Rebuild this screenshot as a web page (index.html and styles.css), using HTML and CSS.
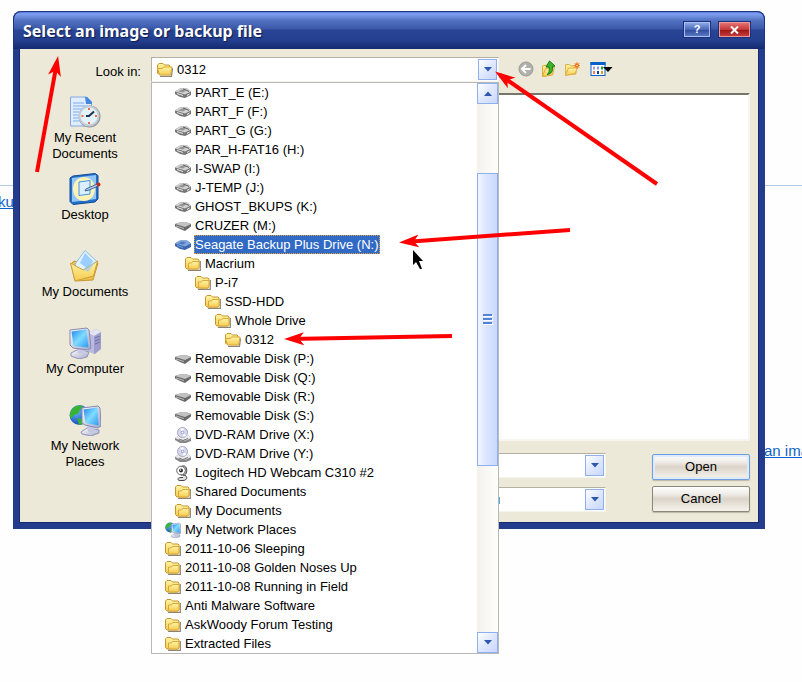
FILE: index.html
```html
<!DOCTYPE html>
<html lang="en">

<head>
    <meta charset="UTF-8">
    <meta name="viewport" content="width=device-width, initial-scale=1.0">
    <title>Select an image or backup file</title>
    <link rel="stylesheet" href="styles.css">
</head>

<body>
    <!-- shared icons -->
    <svg class="sprite" aria-hidden="true">
        <defs>
            <linearGradient id="gold" x1="0" y1="0" x2="0" y2="1">
                <stop offset="0" stop-color="#fff5a6" />
                <stop offset="1" stop-color="#f5cb50" />
            </linearGradient>
            <linearGradient id="screen" x1="0" y1="0" x2="1" y2="1">
                <stop offset="0" stop-color="#1f86ee" />
                <stop offset="0.5" stop-color="#7fdcff" />
                <stop offset="1" stop-color="#2e98f4" />
            </linearGradient>
            <linearGradient id="steel" x1="0" y1="0" x2="1" y2="1">
                <stop offset="0" stop-color="#ffffff" />
                <stop offset="1" stop-color="#a4a8c8" />
            </linearGradient>
            <radialGradient id="globe" cx="0.35" cy="0.3" r="0.8">
                <stop offset="0" stop-color="#6fb8ff" />
                <stop offset="1" stop-color="#0a3fae" />
            </radialGradient>
            <marker id="head" markerUnits="userSpaceOnUse" markerWidth="20" markerHeight="14" refX="14" refY="7" orient="auto">
                <path d="M20 7L0 0.5L5 7L0 13.5Z" fill="#f00" />
            </marker>
        </defs>
        <symbol id="folder" viewBox="0 0 16 16">
            <path d="M3 14.300h12.300V5" fill="none" stroke="#8a8478" stroke-width="1.200" />
            <path d="M0.500 11.500v-8.500l1.500-1.500h4l1.500 1.500h5.500l1 1v8l-1.500 1h-10.500z" fill="url(#gold)" stroke="#c9952a" />
            <path d="M3.500 12v-5h3l1-1.500h6.500v6.500l-1 1h-9z" fill="url(#gold)" stroke="#d9a838" />
        </symbol>
        <symbol id="folder-open" viewBox="0 0 16 16">
            <path d="M3 14.300h11.500l1-8" fill="none" stroke="#8a8478" stroke-width="1.200" />
            <path d="M0.500 11v-8l1.500-1.500h4l1.500 1.500h4.500l1 1v8h-11.500z" fill="url(#gold)" stroke="#c9952a" />
            <path d="M2.500 13l-2-6.500h5l1-1.500h8.500l-1.500 8z" fill="url(#gold)" stroke="#d9a838" />
        </symbol>
        <symbol id="drive" viewBox="0 0 16 16">
            <path d="M0 6.500L5 3.500h7l4 3v3.500l-6 3L5 12 0 9z" fill="#767676" />
            <path d="M0 6.500L5 3.500h7l4 3-6 3z" fill="#d2d2d2" />
            <path d="M3 6.500L7 4.500l4 1-3 2z" fill="#949494" />
            <path d="M8 4l4 1.500 2 1" stroke="#5c5c5c" fill="none" />
            <path d="M2 8.500l6 2" stroke="#e8e8e8" />
            <path d="M12 10.500l2.500-1.500" stroke="#f4f4f4" />
        </symbol>
        <symbol id="drive-flat" viewBox="0 0 16 16">
            <path d="M0 6L5 4.500h7l4 1.500v2.500l-6 4.500-5-2-5-2.500z" fill="#6a6a6a" />
            <path d="M0 6L5 4.500h7l4 1.500-6 3z" fill="#c3c3c3" />
            <path d="M1 8l8 2.500" stroke="#bbb" />
        </symbol>
        <symbol id="drive-on" viewBox="0 0 16 16">
            <path d="M0 6.500L5 3.500h7l4 3v3.500l-6 3L5 12 0 9z" fill="#3c65ae" />
            <path d="M0 6.500L5 3.500h7l4 3-6 3z" fill="#80a6de" />
            <path d="M3 6.500L7 4.500l4 1-3 2z" fill="#5179bd" />
            <path d="M2 8.500l6 2" stroke="#7ba4e4" />
        </symbol>
        <symbol id="dvd" viewBox="0 0 16 16">
            <path d="M0 11l4-3h9l3 3v3l-5 2H5l-5-3z" fill="#878787" />
            <path d="M0 11l4-3h9l3 3-5 2.500H6z" fill="#e9e9ee" />
            <circle cx="7.500" cy="5.500" r="5" fill="#d6d8f2" stroke="#a5a7bd" />
            <path d="M7.500 5.500L5 1.500h4zM7.500 5.500l4 3-3 1.500z" fill="#fff" />
            <circle cx="7.500" cy="5.500" r="1.300" fill="#fff" stroke="#7778ad" stroke-width="0.700" />
            <path d="M4 12l4 1.500 5-2" fill="none" stroke="#777" />
        </symbol>
        <symbol id="webcam" viewBox="0 0 16 16">
            <path d="M8 10c5 0 5 5.500 0 5.500H5c-3 0-3-3 1-3h2" fill="#ddd" stroke="#444" />
            <path d="M7 1h2.500c3 1.500 3 7.500 0 9H6z" fill="#bbb" stroke="#444" />
            <circle cx="6" cy="5.500" r="4.300" fill="#fff" stroke="#666" />
            <circle cx="6" cy="5.500" r="1.900" fill="#222" />
            <circle cx="5.500" cy="5" r="0.800" fill="#fff" />
        </symbol>
        <symbol id="computer" viewBox="0 0 32 32">
            <path d="M19 6l8-4 5 3v17l-6 5-7-3z" fill="#9d9ccc" />
            <path d="M19 6l8-4 5 3-7 4z" fill="#e4e4f5" />
            <path d="M19 6l6 3v18l-6-3z" fill="#bcbce2" />
            <path d="M26 11l5-2M26 14l5-2M26 17l5-2" stroke="#6e70a8" />
            <path d="M2 26l8-4 10 3-2 5-8 2-8-3z" fill="url(#steel)" stroke="#9093bd" />
            <path d="M8 20l8 2-1 5-6-1z" fill="#c5c7e3" />
            <path d="M1 3l17-2 2 2 2 18-3 2-15-2-3-3z" fill="url(#steel)" stroke="#8689b6" />
            <path d="M2.500 4.500l15-2 2 18-15-1.500z" fill="url(#screen)" />
        </symbol>
        <symbol id="network" viewBox="0 0 32 32">
            <circle cx="10.500" cy="11" r="10" fill="url(#globe)" />
            <path d="M3 5c3-4 8-4 11-3l-3 4-2 4-4 1-3 4c-2-4-1-7 1-10zM8 14l5 1 1 5-4 1z" fill="#38b335" />
            <path d="M12 28l6-4 12 2v3l-8 3-9-2z" fill="url(#steel)" stroke="#9093bd" />
            <path d="M18 21l8 2-1 5h-6z" fill="#c5c7e3" />
            <path d="M13 4l16-2 2 2 1 18-3 2-13-3-3-2z" fill="url(#steel)" stroke="#8689b6" />
            <path d="M14.500 5.500l14-2L29.500 21.500l-13-2.500z" fill="url(#screen)" />
        </symbol>
        <symbol id="arrow-down" viewBox="0 0 8 5">
            <path d="M0 0h8L4 4.500z" fill="#2d57ad" />
        </symbol>
    </svg>

    <div class="page-behind">
        <hr>
        <a class="link-left" href="#">ku</a>
        <a class="link-right" href="#">an ima</a>
    </div>

    <div class="dialog" role="dialog" aria-labelledby="dialog-title">
        <div class="titlebar">
            <h1 id="dialog-title">Select an image or backup file</h1>
            <button class="help" aria-label="Help">?</button>
            <button class="close" aria-label="Close">
                <svg width="9" height="8" viewBox="0 0 9 8"><path d="M1 0.500l7 7M8 0.500l-7 7" stroke="#fff" stroke-width="2" /></svg>
            </button>
        </div>

        <div class="content">
            <label class="look-label" for="look-in">Look in:</label>
            <div class="look-row">
                <div class="combo look-in">
                    <svg class="icon"><use href="#folder-open" /></svg>
                    <select id="look-in"><option>0312</option></select>
                    <span class="drop"><svg><use href="#arrow-down" /></svg></span>

                    <div class="menu">
                        <ul role="listbox" aria-label="Look in">
                            <li class="l1" role="option"><svg class="icon"><use href="#drive" /></svg><span>PART_E (E:)</span></li>
                            <li class="l1" role="option"><svg class="icon"><use href="#drive" /></svg><span>PART_F (F:)</span></li>
                            <li class="l1" role="option"><svg class="icon"><use href="#drive" /></svg><span>PART_G (G:)</span></li>
                            <li class="l1" role="option"><svg class="icon"><use href="#drive" /></svg><span>PAR_H-FAT16 (H:)</span></li>
                            <li class="l1" role="option"><svg class="icon"><use href="#drive" /></svg><span>I-SWAP (I:)</span></li>
                            <li class="l1" role="option"><svg class="icon"><use href="#drive" /></svg><span>J-TEMP (J:)</span></li>
                            <li class="l1" role="option"><svg class="icon"><use href="#drive" /></svg><span>GHOST_BKUPS (K:)</span></li>
                            <li class="l1" role="option"><svg class="icon"><use href="#drive-flat" /></svg><span>CRUZER (M:)</span></li>
                            <li class="l1 selected" role="option" aria-selected="true"><svg class="icon"><use href="#drive-on" /></svg><span>Seagate Backup Plus Drive (N:)</span></li>
                            <li class="l2" role="option"><svg class="icon"><use href="#folder" /></svg><span>Macrium</span></li>
                            <li class="l3" role="option"><svg class="icon"><use href="#folder" /></svg><span>P-i7</span></li>
                            <li class="l4" role="option"><svg class="icon"><use href="#folder" /></svg><span>SSD-HDD</span></li>
                            <li class="l5" role="option"><svg class="icon"><use href="#folder" /></svg><span>Whole Drive</span></li>
                            <li class="l6" role="option"><svg class="icon"><use href="#folder-open" /></svg><span>0312</span></li>
                            <li class="l1" role="option"><svg class="icon"><use href="#drive-flat" /></svg><span>Removable Disk (P:)</span></li>
                            <li class="l1" role="option"><svg class="icon"><use href="#drive-flat" /></svg><span>Removable Disk (Q:)</span></li>
                            <li class="l1" role="option"><svg class="icon"><use href="#drive-flat" /></svg><span>Removable Disk (R:)</span></li>
                            <li class="l1" role="option"><svg class="icon"><use href="#drive-flat" /></svg><span>Removable Disk (S:)</span></li>
                            <li class="l1" role="option"><svg class="icon"><use href="#dvd" /></svg><span>DVD-RAM Drive (X:)</span></li>
                            <li class="l1" role="option"><svg class="icon"><use href="#dvd" /></svg><span>DVD-RAM Drive (Y:)</span></li>
                            <li class="l1" role="option"><svg class="icon"><use href="#webcam" /></svg><span>Logitech HD Webcam C310 #2</span></li>
                            <li class="l1" role="option"><svg class="icon"><use href="#folder" /></svg><span>Shared Documents</span></li>
                            <li class="l1" role="option"><svg class="icon"><use href="#folder" /></svg><span>My Documents</span></li>
                            <li role="option"><svg class="icon"><use href="#network" /></svg><span>My Network Places</span></li>
                            <li role="option"><svg class="icon"><use href="#folder" /></svg><span>2011-10-06 Sleeping</span></li>
                            <li role="option"><svg class="icon"><use href="#folder" /></svg><span>2011-10-08 Golden Noses Up</span></li>
                            <li role="option"><svg class="icon"><use href="#folder" /></svg><span>2011-10-08 Running in Field</span></li>
                            <li role="option"><svg class="icon"><use href="#folder" /></svg><span>Anti Malware Software</span></li>
                            <li role="option"><svg class="icon"><use href="#folder" /></svg><span>AskWoody Forum Testing</span></li>
                            <li role="option"><svg class="icon"><use href="#folder" /></svg><span>Extracted Files</span></li>
                        </ul>
                        <div class="scrollbar">
                            <button class="scroll-btn up" aria-label="Scroll up"><svg><use href="#arrow-down" /></svg></button>
                            <div class="track-top"></div>
                            <div class="thumb"><i></i><i></i><i></i></div>
                            <div class="track-bottom"></div>
                            <button class="scroll-btn" aria-label="Scroll down"><svg><use href="#arrow-down" /></svg></button>
                        </div>
                    </div>
                </div>

                <div class="tools">
                    <button aria-label="Back">
                        <svg width="16" height="18" viewBox="0 0 16 18">
                            <circle cx="8" cy="9" r="7" fill="#b1b1ac" stroke="#9a9a96" />
                            <path d="M12.500 9h-8M8 5L4 9l4 4" fill="none" stroke="#fff" stroke-width="2" />
                        </svg>
                    </button>
                    <button aria-label="Up one level">
                        <svg width="16" height="18" viewBox="0 0 16 18">
                            <path d="M1.500 16V6l4-1 1 1.500 5-1V14l-9 2.500z" fill="url(#gold)" stroke="#d9ac3c" />
                            <path d="M1.500 16.500l3-8 9-1.500-2 8z" fill="url(#gold)" stroke="#d9ac3c" />
                            <path d="M6 14.500c2.500-1 2.500-4 2-7.500H5L8.500 1 14 6l-2.500.5C12 11 10.500 14 6 14.500z" fill="#39b52c" stroke="#187a16" />
                        </svg>
                    </button>
                    <button aria-label="New folder">
                        <svg width="16" height="18" viewBox="0 0 16 18">
                            <path d="M1.500 15v-10.500h4l1.500 1.500h5v8z" fill="url(#gold)" stroke="#dfb044" />
                            <path d="M1.500 15.500l3-7.500h9l-2.500 5.500z" fill="url(#gold)" stroke="#dfb044" />
                            <path d="M13 2v7M9.500 5.500h7M10.500 3l5 5M15.500 3l-5 5" stroke="#f4862a" />
                            <circle cx="13" cy="5.500" r="1.500" fill="#ffdf4d" stroke="#ec5023" />
                        </svg>
                    </button>
                    <button aria-label="Views">
                        <svg width="23" height="18" viewBox="0 0 23 18">
                            <rect x="1" y="2.500" width="14" height="13" fill="#fff" stroke="#0860cd" />
                            <path d="M0.500 3.500h15" stroke="#0860cd" stroke-width="3" />
                            <path d="M3 8h2" stroke="#a99ac8" stroke-width="3" />
                            <path d="M7 8h2" stroke="#8595e0" stroke-width="3" />
                            <path d="M11 8h2" stroke="#23a03a" stroke-width="3" />
                            <path d="M3 12.500h2" stroke="#f08060" stroke-width="3" />
                            <path d="M7 12.500h2" stroke="#153a9c" stroke-width="3" />
                            <path d="M11 12.500h2" stroke="#c9a820" stroke-width="3" />
                            <path d="M13 7h9.500l-4.500 5z" fill="#000" />
                        </svg>
                    </button>
                </div>
            </div>

            <nav class="places">
                <a href="#">
                    <svg width="32" height="32" viewBox="0 0 32 32">
                        <path d="M1.500 1h16l5 5v24h-21z" fill="#e0edff" stroke="#83a9dc" />
                        <path d="M16 1h2l5 5v2h-6z" fill="#4388e0" />
                        <path d="M4 7h11M4 10h15M4 13h9M4 16h6M4 19h5M4 22h5M4 25h6" stroke="#7caef2" />
                        <circle cx="20.500" cy="20.500" r="11" fill="#8f969e" />
                        <circle cx="20" cy="20" r="9.500" fill="#e2f3ff" stroke="#c4cdd6" stroke-width="2" />
                        <path d="M20 12v2M20 26v2M12.500 20h2M26 20h2" stroke="#ee6c3b" stroke-width="2" />
                        <path d="M25 15.500l-5 4.500h-3" fill="none" stroke="#1d324c" stroke-width="2" />
                    </svg>
                    <span>My Recent<br>Documents</span>
                </a>
                <a href="#">
                    <svg width="32" height="32" viewBox="0 0 32 32">
                        <path d="M1 5l3-2L26 0.500l3 2V26l-3 3-22 2.500-3-3z" fill="#2470c8" stroke="#124a98" />
                        <path d="M3 5l24-3V26L3 29z" fill="#92c7fa" />
                        <ellipse cx="15" cy="16" rx="11" ry="12" fill="#fff2b5" />
                        <path d="M10 9l11-1.500v13.500L10 22.500z" fill="#dcefff" stroke="#3d95e8" />
                        <path d="M17 16l11-5 1 2-9 4-4 1z" fill="#c1daf4" stroke="#3a5f96" />
                        <circle cx="29.500" cy="11.500" r="2" fill="#c42d22" />
                    </svg>
                    <span>Desktop</span>
                </a>
                <a href="#">
                    <svg width="32" height="32" viewBox="0 0 32 32">
                        <path d="M2 14l3-3 4 1 16-2 4 3-5 17-18 1z" fill="#ecc24c" stroke="#c89631" />
                        <path d="M6 14L16 0.500l12 11-7 11-12 1z" fill="#e2f3ff" stroke="#8fbbe9" />
                        <path d="M16 3l8 8-5 8-8-6z" fill="#9cceff" />
                        <path d="M1.500 13l9 5 4 2 14-9-4 15L6 31z" fill="url(#gold)" stroke="#cfa03a" />
                        <path d="M14 19l13-8-8 11z" fill="#8ec7ff" opacity=".6" />
                    </svg>
                    <span>My Documents</span>
                </a>
                <a href="#">
                    <svg width="32" height="32"><use href="#computer" /></svg>
                    <span>My Computer</span>
                </a>
                <a href="#">
                    <svg width="32" height="32"><use href="#network" /></svg>
                    <span>My Network<br>Places</span>
                </a>
            </nav>

            <div class="file-list"></div>

            <div class="bottom">
                <div class="fields">
                    <div class="combo">
                        <input type="text" aria-label="File name">
                        <span class="drop"><svg><use href="#arrow-down" /></svg></span>
                    </div>
                    <div class="combo">
                        <select aria-label="Files of type"><option>u</option></select>
                        <span class="drop"><svg><use href="#arrow-down" /></svg></span>
                    </div>
                </div>
                <div class="actions">
                    <button class="default">Open</button>
                    <button>Cancel</button>
                </div>
            </div>
        </div>
    </div>

    <!-- red pointers and mouse cursor drawn over the window -->
    <svg class="notes" width="802" height="682" aria-hidden="true">
        <g stroke="#f00" stroke-width="4">
            <path d="M37 172L57 62" marker-end="url(#head)" />
            <path d="M657 184L500 75" marker-end="url(#head)" />
            <path d="M570 230L405 242" marker-end="url(#head)" />
            <path d="M452 336L290 339" marker-end="url(#head)" />
        </g>
        <path d="M413 250v15l3-3 4 7h2l-3-8h4z" fill="#000" />
    </svg>
</body>

</html>
```
FILE: styles.css
```css
* {
    box-sizing: border-box;
}

body {
    margin: 0;
    padding: 11px 37px 28px 13px;
    position: relative;
    min-height: 100vh;
    overflow: hidden;
    background: #fefefe;
    font-family: "Liberation Sans", Arial, sans-serif;
    font-size: 13px;
    line-height: 16px;
    color: #000;
}

button,
input,
select {
    font: inherit;
    color: inherit;
    margin: 0;
    padding: 0;
    border: 0;
    background: none;
}

.sprite {
    position: absolute;
    width: 0;
    height: 0;
}

/* page under the dialog */
.page-behind {
    position: absolute;
    inset: 0;
}

.page-behind hr {
    position: absolute;
    top: 185px;
    width: 100%;
    margin: 0;
    border: 0;
    border-top: 1px solid #b4cbe4;
}

.page-behind a {
    position: absolute;
    color: #0a63c5;
    font-size: 15px;
    line-height: 18px;
    white-space: nowrap;
}

.link-left {
    top: 193px;
    left: -2px;
}

.link-right {
    top: 442px;
    left: calc(100% - 38px);
}

.dialog {
    position: relative;
    border: 6px solid #233c8c;
    border-top: 0;
    border-radius: 8px 8px 0 0;
    background: #ece9d8;
    box-shadow: 0 0 0 1px #152a70 inset;
}

.titlebar {
    display: flex;
    align-items: center;
    height: 38px;
    margin: 0 -6px;
    padding: 0 14px 0 9px;
    border: 1px solid #1c3480;
    border-bottom: 0;
    border-radius: 8px 8px 0 0;
    background: linear-gradient(#5a80dc 0, #7f9ff0 2px, #5474c4 8px, #3a57a8 17px, #2a4596 18px, #24408f 28px, #142a70 100%);
}

.titlebar h1 {
    flex: 1;
    margin: 0;
    font-family: "Noto Sans", "Open Sans", sans-serif;
    font-size: 16px;
    font-weight: 700;
    line-height: 24px;
    color: #fff;
    text-shadow: 1px 1px 1px #0c1b50;
}

.titlebar button {
    display: flex;
    align-items: center;
    justify-content: center;
    height: 15px;
    margin-bottom: 2px;
    color: #fff;
    font-size: 11px;
    font-weight: 700;
    line-height: 13px;
    outline: 1px solid #1c2f78;
}

.titlebar .help {
    width: 26px;
    margin-right: 9px;
    border: 1px solid #a9c0f4;
    background: linear-gradient(#8ba6e6, #4a68b8 50%, #2e4a9b 51%, #5877c4);
}

.titlebar .close {
    width: 31px;
    border: 1px solid #eb9a9a;
    background: linear-gradient(#e47070, #c53838 50%, #9a1414 51%, #c63a3a);
}

.content {
    display: grid;
    grid-template-columns: 132px minmax(0, 1fr);
    grid-template-rows: 25px 348px 60px;
    row-gap: 11px;
    padding: 8px 9px 11px 0;
}

.look-label {
    align-self: center;
    padding: 4px 10px 0 0;
    text-align: right;
}

.look-row {
    display: flex;
}

.combo {
    position: relative;
    display: flex;
    height: 25px;
    padding: 1px;
    border: 1px solid #b5b1a2;
    border-right-color: #f4f3ec;
    border-bottom-color: #f4f3ec;
    background: #fff;
}

.combo input,
.combo select {
    flex: 1;
    min-width: 0;
    appearance: none;
    outline: 0;
}

.look-in {
    width: 348px;
    padding-left: 5px;
}

.look-in select {
    padding-left: 4px;
}

.look-in > .icon {
    align-self: center;
}

.drop,
.scroll-btn {
    display: flex;
    align-items: center;
    justify-content: center;
    width: 19px;
    border: 1px solid #8fb0ee;
    background: linear-gradient(135deg, #fff, #dfe7ff 50%, #cad8fd);
}

.drop svg,
.scroll-btn svg {
    width: 8px;
    height: 5px;
}

.up svg {
    transform: rotate(180deg);
}

.icon {
    flex: none;
    width: 16px;
    height: 16px;
}

/* open list */
.menu {
    position: absolute;
    top: 24px;
    left: -1px;
    z-index: 2;
    display: flex;
    width: 348px;
    border: 1px solid #b8b8b8;
    background: #fff;
}

.menu ul {
    flex: 1;
    margin: 0;
    padding: 0;
    list-style: none;
}

.menu li {
    display: flex;
    align-items: center;
    gap: 3px;
    height: 19px;
    padding-left: 13px;
    white-space: nowrap;
}

.menu li span {
    padding: 0 1px;
    line-height: 19px;
}

.menu .l1 {
    padding-left: 23px;
}

.menu .l2 {
    padding-left: 33px;
}

.menu .l3 {
    padding-left: 43px;
}

.menu .l4 {
    padding-left: 53px;
}

.menu .l5 {
    padding-left: 63px;
}

.menu .l6 {
    padding-left: 73px;
}

.menu .selected span {
    background: #316ac5;
    color: #fff;
    outline: 1px dotted #e0a040;
    outline-offset: -1px;
}

.scrollbar {
    display: flex;
    flex-direction: column;
    width: 21px;
    background: linear-gradient(90deg, #f3f1ec, #fefefb);
}

.scroll-btn {
    width: 21px;
    height: 21px;
}

.track-top {
    flex: 69;
}

.track-bottom {
    flex: 167;
}

.thumb {
    flex: 292;
    display: flex;
    flex-direction: column;
    align-items: center;
    justify-content: center;
    gap: 2px;
    border: 1px solid #8fb0ee;
    background: linear-gradient(90deg, #f4f6ff, #dde6ff 40%, #cad8fd);
}

.thumb i {
    width: 9px;
    height: 2px;
    background: #5383d6;
    box-shadow: 1px 1px 0 #fff;
}

.tools {
    display: flex;
    align-items: center;
    gap: 7px;
    padding: 0 0 2px 19px;
}

.tools button {
    display: flex;
}

.tools button:last-child {
    margin-left: 3px;
}

.places {
    grid-row: 2 / 4;
    display: flex;
    flex-direction: column;
    padding-top: 3px;
}

.places a {
    display: flex;
    flex-direction: column;
    align-items: center;
    gap: 2px;
    height: 77px;
    color: #000;
    text-align: center;
    text-decoration: none;
}

.file-list {
    border: 1px solid #77746a;
    border-top-width: 2px;
    border-right: 2px solid #f6f5ef;
    border-bottom: 2px solid #f6f5ef;
    background: #fff;
}

.bottom {
    display: flex;
    justify-content: space-between;
    padding-top: 1px;
}

.fields {
    display: flex;
    flex-direction: column;
    gap: 9px;
    width: 120px;
    margin-left: 335px;
}

.fields select {
    padding-left: 5px;
}

.actions {
    display: flex;
    flex-direction: column;
    gap: 6px;
    padding-top: 1px;
}

.actions button {
    width: 98px;
    height: 26px;
    border: 1px solid #8b8779;
    border-radius: 2px;
    background: linear-gradient(#fff, #efece6 30%, #dad3c8 50%, #ece8df 80%, #f5f2ec);
    box-shadow: 0 1px 1px #bdb9aa;
}

.actions .default {
    border-color: #6f9ee0;
    box-shadow: inset 0 0 0 2px #dfeaff, 0 1px 1px #bdb9aa;
}

.notes {
    position: absolute;
    top: 0;
    left: 0;
    z-index: 5;
    fill: none;
    pointer-events: none;
}
```
